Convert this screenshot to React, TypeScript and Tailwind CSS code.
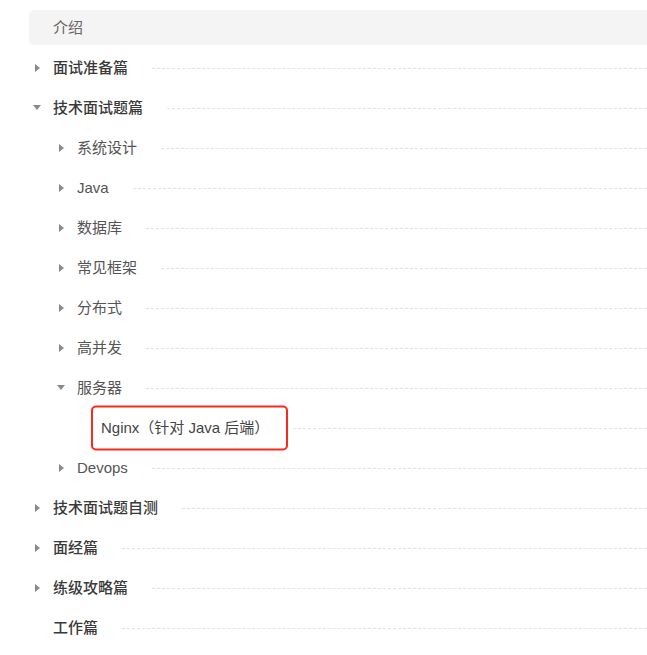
import React from "react";

type Node = {
  label: string;
  level: number;
  arrow?: "right" | "down";
  active?: boolean;
  marked?: boolean;
};

const nodes: Node[] = [
  { label: "介绍", level: 0, active: true },
  { label: "面试准备篇", level: 0, arrow: "right" },
  { label: "技术面试题篇", level: 0, arrow: "down" },
  { label: "系统设计", level: 1, arrow: "right" },
  { label: "Java", level: 1, arrow: "right" },
  { label: "数据库", level: 1, arrow: "right" },
  { label: "常见框架", level: 1, arrow: "right" },
  { label: "分布式", level: 1, arrow: "right" },
  { label: "高并发", level: 1, arrow: "right" },
  { label: "服务器", level: 1, arrow: "down" },
  { label: "Nginx（针对 Java 后端）", level: 2, marked: true },
  { label: "Devops", level: 1, arrow: "right" },
  { label: "技术面试题自测", level: 0, arrow: "right" },
  { label: "面经篇", level: 0, arrow: "right" },
  { label: "练级攻略篇", level: 0, arrow: "right" },
  { label: "工作篇", level: 0 },
];

const indent = ["pl-0", "pl-6", "pl-12"];

function Caret({ dir }: { dir: "right" | "down" }) {
  if (dir === "down") {
    return (
      <svg width="8" height="5" viewBox="0 0 8 5" className="ml-[4px]">
        <path d="M0 0 L8 0 L4 5 Z" fill="#8a8a8a" />
      </svg>
    );
  }
  return (
    <svg width="5" height="8" viewBox="0 0 5 8" className="ml-[6px]">
      <path d="M0 0 L5 4 L0 8 Z" fill="#8a8a8a" />
    </svg>
  );
}

function Row({ node }: { node: Node }) {
  const text =
    node.level === 0
      ? node.active
        ? "text-[#666] font-normal"
        : "text-[#3a3a3a] font-medium"
      : node.level === 1
        ? "text-[#555]"
        : "text-[#444]";

  return (
    <div
      className={`flex h-[35px] items-center ${indent[node.level]} ${
        node.active ? "rounded-l-[5px] bg-[#f4f4f4]" : ""
      }`}
    >
      <div className="flex w-6 shrink-0 items-center">
        {node.arrow && <Caret dir={node.arrow} />}
      </div>
      <span className={`relative whitespace-nowrap text-[15px] leading-none ${text}`}>
        {node.label}
        {node.marked && (
          <span className="pointer-events-none absolute left-[-10px] top-1/2 h-[45px] w-[197px] -translate-y-1/2 rounded-[5px] border-[2.5px] border-[#fa2a1c]" />
        )}
      </span>
      {!node.active && (
        <div className="ml-6 mt-[1px] flex-1 border-t border-dashed border-[#e3e3e3]" />
      )}
    </div>
  );
}

export default function App() {
  return (
    <div
      className="h-[655px] w-[647px] overflow-hidden bg-white pl-[29px] pt-[10px]"
      style={{ fontFamily: '"Liberation Sans", "Noto Sans CJK SC", sans-serif' }}
    >
      <div className="flex flex-col gap-[5px]">
        {nodes.map((n, i) => (
          <Row key={i} node={n} />
        ))}
      </div>
    </div>
  );
}
